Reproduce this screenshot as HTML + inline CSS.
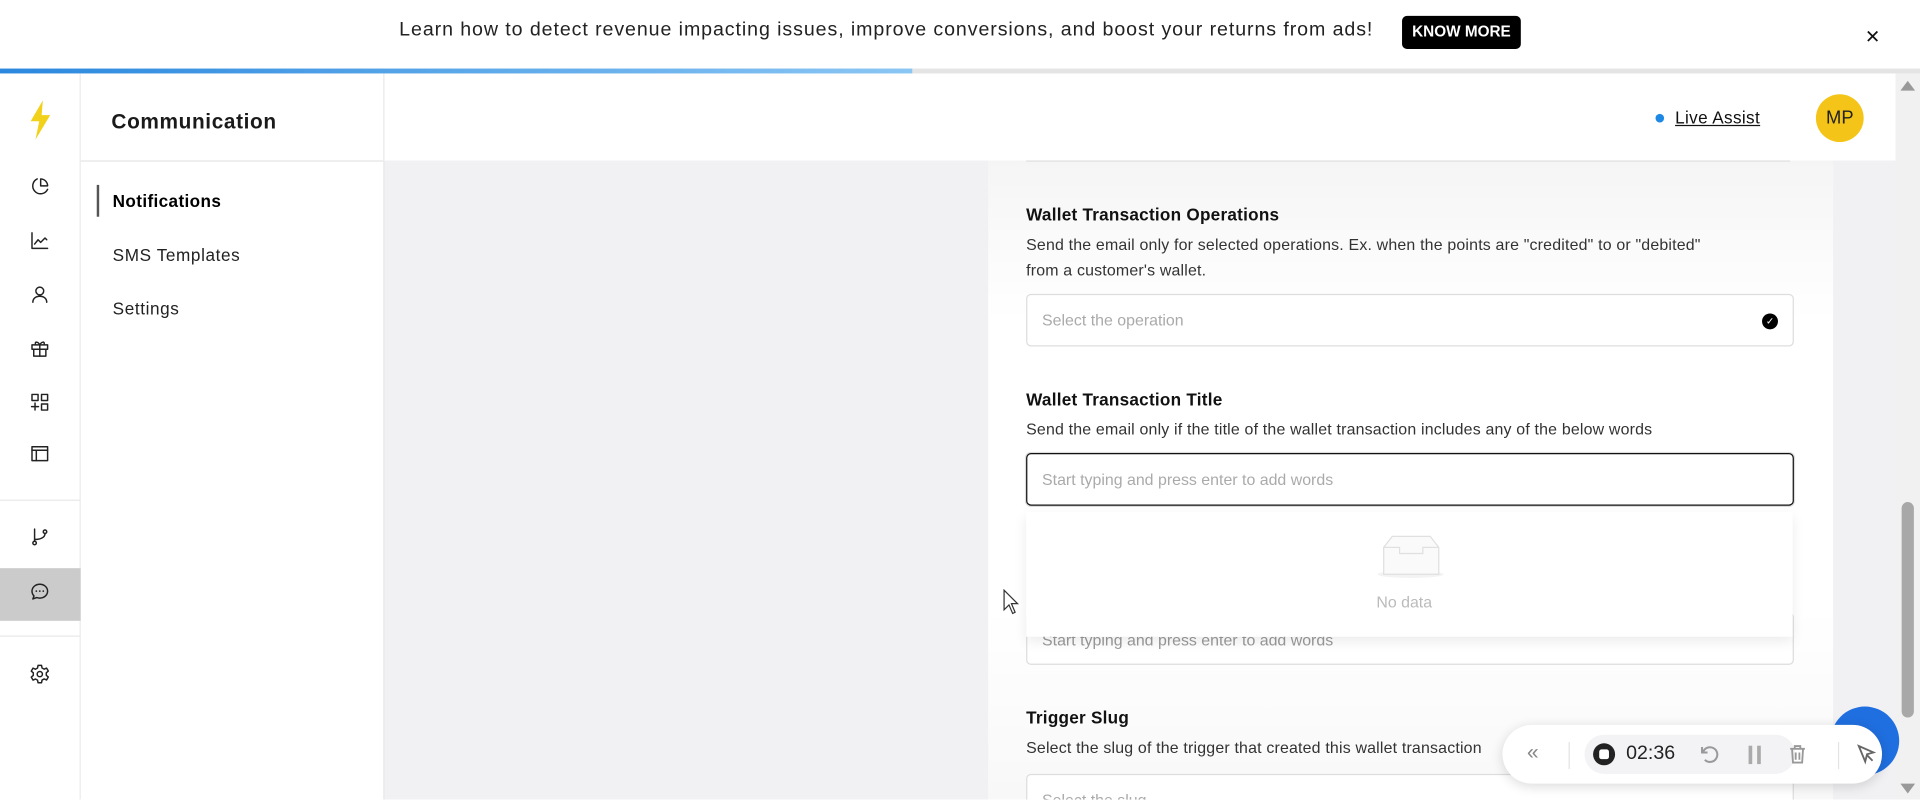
<!DOCTYPE html>
<html><head><meta charset="utf-8"><style>
*{box-sizing:border-box;margin:0;padding:0}
html,body{width:1920px;height:800px;overflow:hidden;background:#fff;font-family:"Liberation Sans",sans-serif;color:#111}
#w{position:absolute;left:0;top:0;width:1568px;height:653px;transform:scale(1.22449);transform-origin:0 0;overflow:hidden}
.a{position:absolute}
.t{white-space:nowrap}
.ic{position:absolute;left:24px;width:17px;height:17px}
.ic svg{width:17px;height:17px;fill:none;stroke:#222;stroke-width:1.7;stroke-linecap:round;stroke-linejoin:round}
.lbl{position:absolute;left:838px;font-weight:bold;font-size:14px;color:#111;letter-spacing:0.2px}
.desc{position:absolute;left:838px;font-size:13px;color:#333;line-height:21px;letter-spacing:0.15px}
.box{position:absolute;left:838px;width:627px;height:43px;border:1px solid #ddd;border-radius:4px;background:#fff}
.ph{position:absolute;left:12px;top:13px;font-size:13px;color:#aaa;white-space:nowrap}
</style></head><body><div id="w">
<!-- banner -->
<div class="a" style="left:0;top:0;width:1568px;height:56px;background:#fff"></div>
<div class="a t" style="left:326px;top:16px;font-size:16px;color:#222;letter-spacing:0.75px">Learn how to detect revenue impacting issues, improve conversions, and boost your returns from ads!</div>
<div class="a t" style="left:1145px;top:13px;width:97px;height:27px;background:#000;border-radius:4px;color:#fff;font-size:12.5px;line-height:27px;text-align:center;font-weight:bold">KNOW MORE</div>
<div class="a" style="left:1523px;top:21px;font-size:15px;color:#111">✕</div>
<div class="a" style="left:0;top:56px;width:1568px;height:4px;background:#e4e4e4"></div>
<div class="a" style="left:0;top:56px;width:745px;height:4px;background:linear-gradient(90deg,#2b88de,#8ac6f4)"></div>
<!-- icon rail -->
<div class="a" style="left:0;top:60px;width:66px;height:593px;background:#fff;border-right:1px solid #e8e8e8"></div>
<svg class="a" style="left:22px;top:82px" width="22" height="32" viewBox="0 0 22 32"><path d="M13 0 L3 17 L10 17 L7 32 L19 12 L12 12 Z" fill="#f2d11a"/></svg>
<div class="ic" style="top:144px"><svg viewBox="0 0 24 24"><path d="M21 15A9 9 0 1 1 9 3"/><path d="M13 3a8 8 0 0 1 8 8h-8z"/></svg></div>
<div class="ic" style="top:188px"><svg viewBox="0 0 24 24"><path d="M3 3v18h18"/><path d="M6 16l4-5 3 3 5-5 2 2"/></svg></div>
<div class="ic" style="top:232px"><svg viewBox="0 0 24 24"><circle cx="12" cy="8" r="4.5"/><path d="M4 21c0-4.5 3.5-7 8-7s8 2.5 8 7"/></svg></div>
<div class="ic" style="top:276px"><svg viewBox="0 0 24 24"><rect x="3" y="8" width="18" height="5"/><rect x="5" y="13" width="14" height="8"/><path d="M12 8v13M12 8c-2-4-6-4-5-1M12 8c2-4 6-4 5-1"/></svg></div>
<div class="ic" style="top:320px"><svg viewBox="0 0 24 24"><rect x="3" y="3" width="7" height="7"/><rect x="14" y="3" width="7" height="7"/><rect x="14" y="14" width="7" height="7"/><path d="M6.5 13v8M2.5 17h8"/></svg></div>
<div class="ic" style="top:362px"><svg viewBox="0 0 24 24"><rect x="3" y="4" width="18" height="16"/><path d="M3 8h18M8 8v12"/></svg></div>
<div class="a" style="left:0;top:408px;width:66px;height:1px;background:#e8e8e8"></div>
<div class="ic" style="top:430px"><svg viewBox="0 0 24 24"><circle cx="6" cy="19" r="2"/><circle cx="18" cy="6" r="2"/><path d="M6 17V3M6 15c8 0 12-3 12-7"/></svg></div>
<div class="a" style="left:0;top:464px;width:66px;height:43px;background:#cbcbcb"></div>
<div class="ic" style="top:475px"><svg viewBox="0 0 24 24"><path d="M12 3c5 0 9 3.5 9 8s-4 8-9 8c-1.3 0-2.5-.2-3.6-.6L4 20l1.3-3.5C3.8 15 3 13.1 3 11c0-4.5 4-8 9-8z"/><path d="M8 11h.01M12 11h.01M16 11h.01" stroke-width="2"/></svg></div>
<div class="a" style="left:0;top:519px;width:66px;height:1px;background:#e8e8e8"></div>
<div class="ic" style="top:542px"><svg viewBox="0 0 24 24"><circle cx="12" cy="12" r="3"/><path d="M10 2h4l.6 3 2.4 1.3 2.8-1.2 2 3.4-2.3 2v2.9l2.3 2-2 3.4-2.8-1.2-2.4 1.3L14 22h-4l-.6-3-2.4-1.3-2.8 1.2-2-3.4 2.3-2v-2.9l-2.3-2 2-3.4 2.8 1.2L9.4 5z"/></svg></div>
<!-- second sidebar -->
<div class="a" style="left:66px;top:60px;width:248px;height:593px;background:#fff;border-right:1px solid #e8e8e8"></div>
<div class="a" style="left:66px;top:131px;width:247px;height:1px;background:#e4e4e4"></div>
<div class="a t" style="left:91px;top:90px;font-size:17px;font-weight:bold;color:#1a1a1a;letter-spacing:0.5px">Communication</div>
<div class="a" style="left:79px;top:151px;width:2px;height:26px;background:#555"></div>
<div class="a t" style="left:92px;top:156px;font-size:14px;font-weight:bold;color:#000;letter-spacing:0.3px">Notifications</div>
<div class="a t" style="left:92px;top:200px;font-size:14px;color:#222;letter-spacing:0.5px">SMS Templates</div>
<div class="a t" style="left:92px;top:244px;font-size:14px;color:#222;letter-spacing:0.5px">Settings</div>
<!-- main -->
<div class="a" style="left:314px;top:131px;width:1234px;height:522px;background:#f1f1f3"></div>
<div class="a" style="left:807px;top:131px;width:690px;height:522px;background:linear-gradient(180deg,#f5f5f6 0%,#fff 25%,#fff 70%,#f8f8f8 100%)"></div>
<div class="a" style="left:838px;top:131px;width:624px;height:1px;background:#ddd"></div>
<div class="a" style="left:314px;top:60px;width:1234px;height:71px;background:#fff"></div>
<div class="a" style="left:1352px;top:93px;width:7px;height:7px;border-radius:50%;background:#1e88e5"></div>
<div class="a t" style="left:1368px;top:88px;font-size:14px;color:#111;text-decoration:underline;letter-spacing:0.3px">Live Assist</div>
<div class="a" style="left:1483px;top:77px;width:39px;height:39px;border-radius:50%;background:#f4c418;font-size:15px;line-height:39px;text-align:center;color:#222">MP</div>
<!-- form -->
<div class="lbl t" style="top:167px">Wallet Transaction Operations</div>
<div class="desc" style="top:189px">Send the email only for selected operations. Ex. when the points are "credited" to or "debited"<br>from a customer's wallet.</div>
<div class="box" style="top:240px"><div class="ph">Select the operation</div><div class="a" style="right:12px;top:15px;width:13px;height:13px;border-radius:50%;background:#000;color:#fff;font-size:8px;line-height:13px;text-align:center">✓</div></div>
<div class="lbl t" style="top:318px">Wallet Transaction Title</div>
<div class="desc t" style="top:340px">Send the email only if the title of the wallet transaction includes any of the below words</div>
<div class="box" style="top:370px;border:1.5px solid #111;box-shadow:0 0 0 1px #ddd"><div class="ph">Start typing and press enter to add words</div></div>
<div class="box" style="top:500px"><div class="ph" style="top:14px;color:#999">Start typing and press enter to add words</div></div>
<div class="a" style="left:838px;top:418px;width:626px;height:102px;background:#fff;box-shadow:0 4px 10px rgba(0,0,0,.08)"></div>
<svg class="a" style="left:1125px;top:435px" width="55" height="40" viewBox="0 0 55 40"><ellipse cx="27" cy="34" rx="27" ry="3" fill="#f3f3f3"/><path d="M5 12 L12 3 H43 L50 12 V34 H5 Z" fill="#fafafa" stroke="#e0e0e0"/><path d="M5 12 H18 V17 H37 V12 H50" fill="none" stroke="#e0e0e0"/></svg>
<div class="a t" style="left:1124px;top:484px;font-size:13px;color:#bbb">No data</div>
<div class="lbl t" style="top:578px">Trigger Slug</div>
<div class="desc t" style="top:600px">Select the slug of the trigger that created this wallet transaction</div>
<div class="box" style="top:632px"><div class="ph">Select the slug</div></div>
<!-- cursor -->
<svg class="a" style="left:819px;top:481px" width="14" height="22" viewBox="0 0 14 22"><path d="M1 1 L1 17 L5 13 L8 20 L10 19 L7 12 L12 12 Z" fill="#fff" stroke="#333"/></svg>
<!-- scrollbar -->
<div class="a" style="left:1548px;top:60px;width:20px;height:593px;background:#f1f1f1"></div>
<div class="a" style="left:1553px;top:410px;width:10px;height:176px;border-radius:5px;background:#a8a8a8"></div>
<div class="a" style="left:1552px;top:66px;width:0;height:0;border-left:6px solid transparent;border-right:6px solid transparent;border-bottom:8px solid #999"></div>
<div class="a" style="left:1552px;top:640px;width:0;height:0;border-left:6px solid transparent;border-right:6px solid transparent;border-top:8px solid #999"></div>
<!-- recorder -->
<div class="a" style="left:1495px;top:577px;width:56px;height:56px;border-radius:50%;background:#1f6fe0"></div>
<div class="a" style="left:1227px;top:592px;width:310px;height:48px;border-radius:24px;background:#fff;box-shadow:0 2px 10px rgba(0,0,0,.15)"></div>
<div class="a t" style="left:1247px;top:605px;font-size:17px;color:#888">«</div>
<div class="a" style="left:1281px;top:606px;width:1px;height:22px;background:#e3e3e3"></div>
<div class="a" style="left:1294px;top:600px;width:172px;height:32px;border-radius:16px;background:#f3f3f5"></div>
<div class="a" style="left:1301px;top:607px;width:18px;height:18px;border-radius:50%;background:#222"></div>
<div class="a" style="left:1306px;top:612px;width:8px;height:8px;border-radius:2px;background:#fff"></div>
<div class="a t" style="left:1328px;top:607px;font-size:16px;color:#222">02:36</div>
<svg class="a" style="left:1387px;top:607px" width="18" height="18" viewBox="0 0 24 24" fill="none" stroke="#999" stroke-width="2.2"><path d="M4 4v6h6"/><path d="M5 10a8 8 0 1 1 2 8"/></svg>
<div class="a" style="left:1428px;top:609px;width:3px;height:15px;background:#aaa"></div>
<div class="a" style="left:1435px;top:609px;width:3px;height:15px;background:#aaa"></div>
<svg class="a" style="left:1459px;top:607px" width="18" height="18" viewBox="0 0 24 24" fill="none" stroke="#999" stroke-width="2"><path d="M4 6h16M9 6V3h6v3M6 6l1 15h10l1-15M10 10v8M14 10v8"/></svg>
<div class="a" style="left:1501px;top:606px;width:1px;height:22px;background:#e3e3e3"></div>
<svg class="a" style="left:1515px;top:607px" width="18" height="18" viewBox="0 0 24 24" fill="none" stroke="#666" stroke-width="2"><path d="M4 3l16 7-7 2-2 8z"/><path d="M13 13l6 6"/></svg>
</div></body></html>
